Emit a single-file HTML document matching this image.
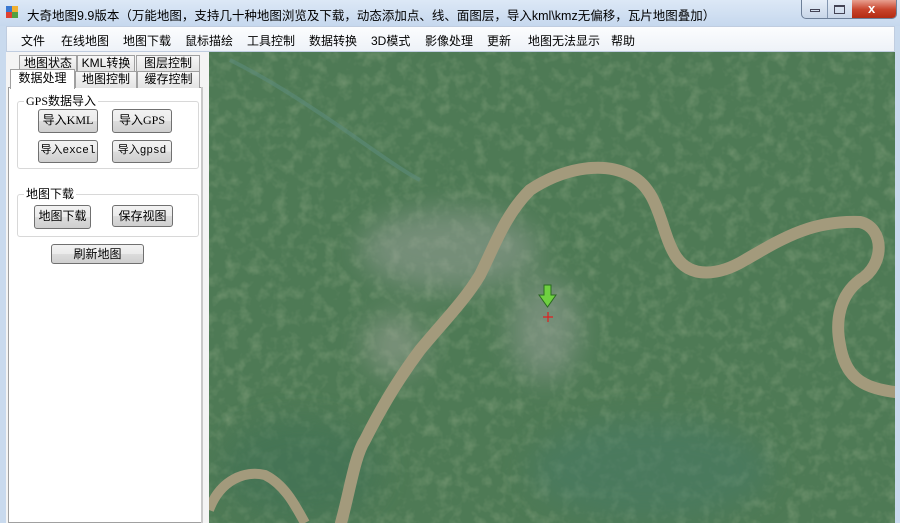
<!DOCTYPE html>
<html><head><meta charset="utf-8"><style>
*{margin:0;padding:0;box-sizing:border-box}
body{width:900px;height:523px;overflow:hidden;background:#c9daee;font-family:"Liberation Sans","Noto Sans CJK SC",sans-serif;font-size:12px;color:#000;position:relative}
.a{position:absolute}
.btn{position:absolute;border:1px solid #707070;border-radius:3px;background:linear-gradient(#f2f2f2,#ebebeb 50%,#dcdcdc 51%,#cfcfcf);text-align:center;font-size:12px;line-height:20px}
.tab{position:absolute;border:1px solid #a0a0a0;border-bottom:none;background:linear-gradient(#f7f7f7,#e3e3e3);text-align:center;font-size:12px;line-height:15px}
.grp{position:absolute;border:1px solid #d8d8d8;border-radius:3px}
.grp span{position:absolute;top:-8px;left:6px;background:#fff;padding:0 2px;font-size:12px;line-height:14px}
.menu span{position:absolute;top:32px;font-size:12px}
</style></head><body>
<div class="a" style="left:0;top:0;width:900px;height:26px;background:linear-gradient(#dce8f6,#c6d8ee)"></div>
<div class="a" style="left:6px;top:6px;width:6px;height:6px;background:#3a78d0"></div>
<div class="a" style="left:12px;top:6px;width:6px;height:6px;background:#f0b030"></div>
<div class="a" style="left:6px;top:12px;width:6px;height:6px;background:#e04030"></div>
<div class="a" style="left:12px;top:12px;width:6px;height:6px;background:#50a040"></div>
<div class="a" style="left:27px;top:5px;font-size:12.5px;color:#000">大奇地图9.9版本（万能地图，支持几十种地图浏览及下载，动态添加点、线、面图层，导入kml\kmz无偏移，瓦片地图叠加）</div>
<div class="a" style="left:801px;top:0;width:96px;height:19px;border:1px solid #6d7f98;border-top:none;border-radius:0 0 5px 5px;overflow:hidden;background:linear-gradient(#e6eef8,#c8d6e8)">
<div class="a" style="left:25px;top:0;width:1px;height:19px;background:#8396b0"></div>
<div class="a" style="left:50px;top:0;width:44px;height:19px;background:linear-gradient(#e8a090,#c8442c 50%,#b02810)"></div>
<div class="a" style="left:8px;top:9px;width:10px;height:3px;border:1px solid #445"></div>
<div class="a" style="left:32px;top:5px;width:11px;height:9px;border:1px solid #445;border-top-width:2px"></div>
<div class="a" style="left:66px;top:1px;color:#fff;font-weight:bold;font-size:13px">x</div>
</div>
<div class="a menu" style="left:6px;top:26px;width:889px;height:26px;background:linear-gradient(#fcfdfe,#eef2f8);border:1px solid #c0cde0"></div>
<div class="menu">
<span style="left:21px">文件</span><span style="left:61px">在线地图</span><span style="left:123px">地图下载</span><span style="left:185px">鼠标描绘</span><span style="left:247px">工具控制</span><span style="left:309px">数据转换</span><span style="left:371px">3D模式</span><span style="left:425px">影像处理</span><span style="left:487px">更新</span><span style="left:528px">地图无法显示</span><span style="left:611px">帮助</span>
</div>
<div class="a" style="left:6px;top:52px;width:203px;height:471px;background:#f4f4f4"></div>
<div class="a" style="left:8px;top:87px;width:194px;height:436px;background:#fff;border:1px solid #a0a0a0"></div>
<div class="tab" style="left:19px;top:55px;width:58px;height:16px">地图状态</div>
<div class="tab" style="left:77px;top:55px;width:58px;height:16px">KML转换</div>
<div class="tab" style="left:136px;top:55px;width:64px;height:16px">图层控制</div>
<div class="tab" style="left:75px;top:71px;width:62px;height:17px">地图控制</div>
<div class="tab" style="left:137px;top:71px;width:63px;height:17px">缓存控制</div>
<div class="tab" style="left:10px;top:69px;width:65px;height:20px;background:#fff;border-color:#a0a0a0;line-height:17px">数据处理</div>
<div class="grp" style="left:17px;top:101px;width:182px;height:68px"><span style="font-family:'Liberation Serif','Noto Sans CJK SC',serif">GPS数据导入</span></div>
<div class="btn" style="left:38px;top:109px;width:60px;height:24px;font-family:'Liberation Serif','Noto Sans CJK SC',serif">导入KML</div>
<div class="btn" style="left:112px;top:109px;width:60px;height:24px;font-family:'Liberation Serif','Noto Sans CJK SC',serif">导入GPS</div>
<div class="btn" style="left:38px;top:140px;width:60px;height:23px;font-family:'Liberation Mono','Noto Sans CJK SC',monospace;font-size:11px">导入excel</div>
<div class="btn" style="left:112px;top:140px;width:60px;height:23px;font-family:'Liberation Mono','Noto Sans CJK SC',monospace;font-size:11px">导入gpsd</div>
<div class="grp" style="left:17px;top:194px;width:182px;height:43px"><span>地图下载</span></div>
<div class="btn" style="left:34px;top:205px;width:57px;height:24px">地图下载</div>
<div class="btn" style="left:112px;top:205px;width:61px;height:22px">保存视图</div>
<div class="btn" style="left:51px;top:244px;width:93px;height:20px;line-height:18px">刷新地图</div>
<div class="a" style="left:201px;top:87px;width:2px;height:436px;background:#c8c8c8"></div>
<div class="a" style="left:895px;top:52px;width:5px;height:471px;background:#c9daee"></div>
<svg class="a" style="left:209px;top:52px" width="686" height="471" viewBox="209 52 686 471">
<defs>
<filter id="f"><feTurbulence type="fractalNoise" baseFrequency="0.08" numOctaves="3" seed="4"/><feColorMatrix values="0 0 0 0 0.45  0 0 0 0 0.55  0 0 0 0 0.35  0 0 0 -1 0.55"/></filter>
<filter id="b"><feGaussianBlur stdDeviation="14"/></filter>
</defs>
<rect x="209" y="52" width="686" height="471" fill="#4e7a55"/>
<rect x="209" y="52" width="686" height="471" filter="url(#f)" opacity=".6"/>
<g filter="url(#b)" opacity=".5">
<ellipse cx="450" cy="250" rx="90" ry="40" fill="#9ca39c"/>
<ellipse cx="545" cy="330" rx="35" ry="50" fill="#9ca39c"/>
<ellipse cx="395" cy="345" rx="30" ry="30" fill="#a5a89e"/>
<ellipse cx="300" cy="470" rx="80" ry="50" fill="#3e6f55"/>
<ellipse cx="650" cy="470" rx="120" ry="50" fill="#467a66"/>
</g>
<path d="M230 60 C270 80 300 100 330 120 C360 140 400 170 420 180" stroke="#5c8a7a" stroke-width="4" fill="none" opacity=".6"/>
<path d="M341 523 C350 490 355 455 365 440 C385 400 405 370 420 350 C445 320 465 300 480 275 C495 245 505 215 530 190 C560 170 600 160 630 175 C660 190 660 230 675 255 C690 280 720 275 745 260 C780 240 810 220 860 222 C885 228 885 265 860 280 C840 295 835 320 840 345 C845 375 860 388 895 392" stroke="#a39a7c" stroke-width="12" fill="none" stroke-linecap="round"/>
<path d="M209 510 C220 480 245 470 265 475 C285 485 295 505 305 523" stroke="#a39a7c" stroke-width="10" fill="none"/>
<path d="M544 285 h7 v10 h5 l-8.5 12 l-8.5 -12 h5z" fill="#6fd040" stroke="#2a6a20" stroke-width="1"/>
<path d="M548 312 v10 M543 317 h10" stroke="#e02020" stroke-width="1.2"/>
</svg>
</body></html>
